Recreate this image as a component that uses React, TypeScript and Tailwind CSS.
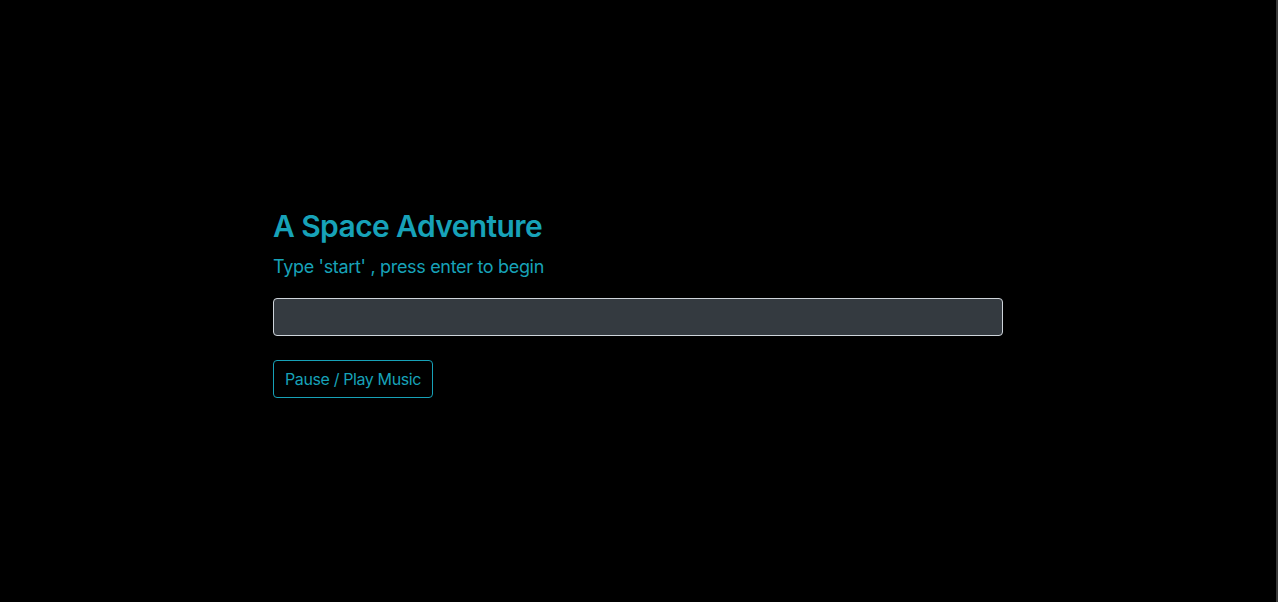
export default function App() {
    return (
        <div className="min-h-screen h-[602px] bg-black flex" style={{ fontFamily: 'Inter, "Liberation Sans", sans-serif' }}>
            <div className="flex-1 flex items-center justify-center">
                <div className="w-[730px] pt-[3px]">
                    <h2 className="text-[30px] leading-[1.2] font-semibold text-[#17a2b8] tracking-[-0.6px] mb-[9px]">
                        A Space Adventure
                    </h2>
                    <p className="text-[18px] leading-[1.5] text-[#17a2b8] tracking-[-0.32px] mb-[18px]">
                        Type 'start' , press enter to begin
                    </p>
                    <input
                        type="text"
                        className="block w-full h-[38px] rounded-[4px] border border-[#ced4da] bg-[#343a40] px-3 text-white outline-none"
                    />
                    <button className="mt-[24px] h-[38px] px-[11px] rounded-[4px] border border-[#17a2b8] text-[#17a2b8] text-[16px] tracking-[-0.38px] bg-transparent">
                        Pause / Play Music
                    </button>
                </div>
            </div>
            <div className="w-[2px] bg-[#3a3a3a]" />
        </div>
    );
}
